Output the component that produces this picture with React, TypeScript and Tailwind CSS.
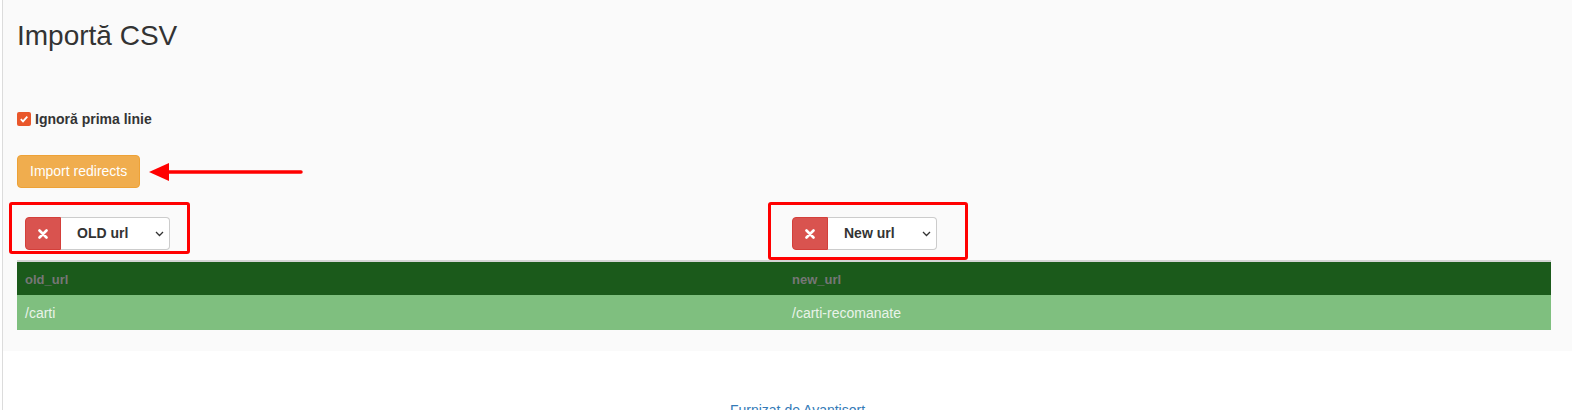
import { useState } from "react";

function ColumnPicker({ label, box }: { label: string; box: string }) {
  return (
    <div className="relative inline-flex h-[33px]">
      {/* annotation frame */}
      <div className={`absolute border-[3px] border-[#ff0000] rounded-[3px] pointer-events-none ${box}`} />
      <button className="w-[36px] h-full bg-[#d9534f] border border-[#d43f3a] rounded-l-[4px] flex items-center justify-center">
        <svg width="10" height="10" viewBox="0 0 10 10">
          <path d="M1.5 1.5 L8.5 8.5 M8.5 1.5 L1.5 8.5" stroke="#fff" strokeWidth="2.6" strokeLinecap="round" />
        </svg>
      </button>
      <div className="w-[109px] h-full bg-white border border-l-0 border-[#ccc] rounded-r-[4px] flex items-center justify-between pl-[16px] pr-[5px]">
        <span className="font-bold text-[14px] text-[#333] whitespace-nowrap">{label}</span>
        <svg width="9" height="6" viewBox="0 0 9 6">
          <path d="M1 1 L4.5 4.5 L8 1" stroke="#333" strokeWidth="1.3" fill="none" />
        </svg>
      </div>
    </div>
  );
}

export default function App() {
  const [skipFirst, setSkipFirst] = useState(true);

  return (
    <div className="min-h-[410px] bg-white pl-[2px] font-['Liberation_Sans',Arial,sans-serif]">
      <div className="border-l border-[#dcdcdc] min-h-[410px]">
        <div className="bg-[#fafafa] pl-[14px] pt-[20px] pb-[21px]">
          <h2 className="text-[28px] leading-[31px] text-[#333]">Importă CSV</h2>

          <label className="mt-[58px] flex items-center h-[20px] gap-[4px] cursor-pointer">
            <span
              onClick={() => setSkipFirst(!skipFirst)}
              className={`w-[14px] h-[14px] rounded-[2px] flex items-center justify-center ${skipFirst ? "bg-[#e9572b]" : "bg-white border border-[#999]"}`}
            >
              {skipFirst && (
                <svg width="10" height="10" viewBox="0 0 10 10">
                  <path d="M1.8 5.2 L4 7.4 L8.3 2.6" stroke="#fff" strokeWidth="1.8" fill="none" />
                </svg>
              )}
            </span>
            <span className="font-bold text-[14px] text-[#333]">Ignoră prima linie</span>
          </label>

          <div className="mt-[26px] relative inline-flex">
            <button className="h-[33px] px-[12px] bg-[#f0ad4e] border border-[#eea236] rounded-[4px] text-white text-[14px]">
              Import redirects
            </button>
            <svg className="absolute left-full top-1/2 -translate-y-1/2 ml-[9px]" width="154" height="20" viewBox="0 0 154 20">
              <polygon points="0,10 20,1 20,19" fill="#ff0000" />
              <line x1="18" y1="10" x2="152" y2="10" stroke="#ff0000" strokeWidth="3.5" strokeLinecap="round" />
            </svg>
          </div>

          <div className="w-[1534px]">
            <div className="flex mt-[29px]">
              <div className="w-[765px] pl-[8px]">
                <ColumnPicker label="OLD url" box="-left-[16px] -top-[15px] -right-[20px] -bottom-[4px]" />
              </div>
              <div className="flex-1 pl-[10px]">
                <ColumnPicker label="New url" box="-left-[24px] -top-[15px] -right-[31px] -bottom-[10px]" />
              </div>
            </div>

            <table className="w-full mt-[10px] border-collapse text-[14px] text-left">
              <thead>
                <tr className="bg-[#1b5a1b] border-t-2 border-[#d4d4d4]">
                  <th className="w-[767px] h-[34px] px-[8px] pt-[2px] font-bold text-[13px] text-[#767676]">old_url</th>
                  <th className="h-[34px] px-[8px] pt-[2px] font-bold text-[13px] text-[#767676]">new_url</th>
                </tr>
              </thead>
              <tbody>
                <tr className="bg-[#7fbf7f]">
                  <td className="h-[35px] px-[8px] pt-[2px] text-[#e9f3e9]">/carti</td>
                  <td className="h-[35px] px-[8px] pt-[2px] text-[#e9f3e9]">/carti-recomanate</td>
                </tr>
              </tbody>
            </table>
          </div>
        </div>

        <div className="flex justify-center pt-[49px] pl-[20px]">
          <a href="#" className="text-[14px] leading-[20px] text-[#337ab7]">Furnizat de Avantisort</a>
        </div>
      </div>
    </div>
  );
}
